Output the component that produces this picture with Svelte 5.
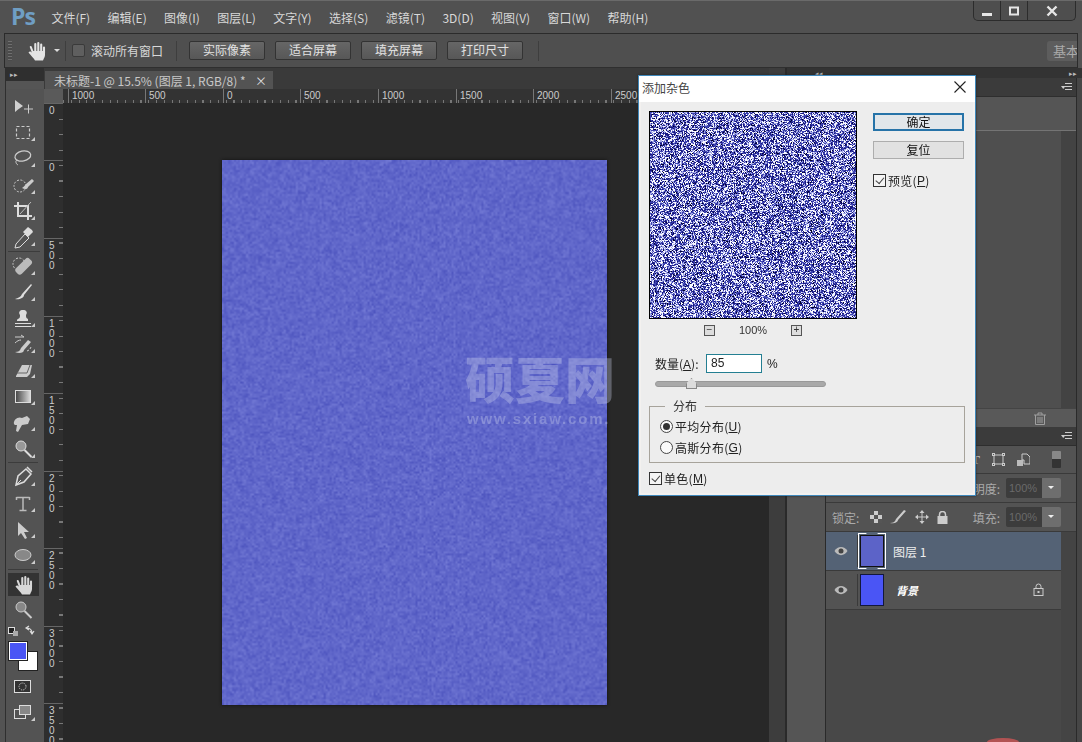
<script>
  import { onMount } from "svelte";

  const menus = ["文件(F)", "编辑(E)", "图像(I)", "图层(L)", "文字(Y)", "选择(S)", "滤镜(T)", "3D(D)", "视图(V)", "窗口(W)", "帮助(H)"];
  const optionButtons = ["实际像素", "适合屏幕", "填充屏幕", "打印尺寸"];
  const topTicks = [
    { label: "1000", x: 5 },
    { label: "500", x: 82 },
    { label: "0", x: 160 },
    { label: "500", x: 237 },
    { label: "1000", x: 315 },
    { label: "1500", x: 393 },
    { label: "2000", x: 470 },
    { label: "2500", x: 548 }
  ];
  const sideTicks = [
    { label: "0", y: 0 },
    { label: "0", y: 57 },
    { label: "500", y: 135 },
    { label: "1000", y: 213 },
    { label: "1500", y: 290 },
    { label: "2000", y: 368 },
    { label: "2500", y: 445 },
    { label: "3000", y: 523 },
    { label: "3500", y: 600 }
  ];
  // y of the little flyout triangle under each tool
  const flyouts = [141, 167, 194, 220, 246, 275, 301, 327, 353, 378, 405, 431, 458, 486, 512, 538, 564, 593, 721];

  let preview;
  let doc;

  // small seeded random so every run gives the same grain
  const makeRand = (seed) => () => {
    seed = (seed * 1664525 + 1013904223) % 4294967296;
    return seed / 4294967296;
  };

  const drawPreview = () => {
    const ctx = preview.getContext("2d");
    const off = document.createElement("canvas");
    off.width = 206;
    off.height = 206;
    const octx = off.getContext("2d");
    const img = octx.createImageData(206, 206);
    const rand = makeRand(77);
    for (let i = 0; i < img.data.length; i += 4) {
      const r = rand();
      let c = [24, 24, 126];
      if (r > 0.74) c = [250, 250, 255];
      else if (r > 0.52) c = [165, 170, 230];
      else if (r > 0.24) c = [60, 66, 176];
      else if (r < 0.05) c = [0, 0, 40];
      img.data[i] = c[0];
      img.data[i + 1] = c[1];
      img.data[i + 2] = c[2];
      img.data[i + 3] = 255;
    }
    octx.putImageData(img, 0, 0);
    ctx.filter = "blur(0.35px)";
    ctx.drawImage(off, 0, 0);
  };

  const drawDoc = () => {
    const ctx = doc.getContext("2d");
    const w = doc.width;
    const h = doc.height;
    const rand = makeRand(1234);
    // soft grain: coarse noise scaled up over a flat base
    const small = document.createElement("canvas");
    small.width = Math.ceil(w / 2);
    small.height = Math.ceil(h / 2);
    const sctx = small.getContext("2d");
    const img = sctx.createImageData(small.width, small.height);
    for (let i = 0; i < img.data.length; i += 4) {
      const d = (rand() + rand() - 1) * 20;
      img.data[i] = 96 + d;
      img.data[i + 1] = 103 + d;
      img.data[i + 2] = 202 + d * 0.6;
      img.data[i + 3] = 255;
    }
    sctx.putImageData(img, 0, 0);
    ctx.imageSmoothingEnabled = true;
    ctx.drawImage(small, 0, 0, w, h);
  };

  onMount(() => {
    drawPreview();
    drawDoc();
  });
</script>

{#snippet hand(size, color)}
  <svg width={size} height={size} viewBox="0 0 20 20">
    <g stroke={color} stroke-width="2.100" stroke-linecap="round" fill="none">
      <path d="M5.500 10.500L3.800 6M8.300 10V3M11.300 10V2M14.200 10V3.500M17 12V6.500" />
    </g>
    <path d="M5 10h13v4c0 2-1 3-2 5.500H8c-1-2-4-5-6.500-8 1-1.500 2.500-1 3.500 0z" fill={color} />
  </svg>
{/snippet}

{#snippet menuIcon()}
  <svg width="11" height="8" viewBox="0 0 11 8"><path d="M0 3h4.500L2.250 6z" fill="#ccc" /><path d="M4 .5h7M4 3.500h7M4 6.500h7" stroke="#ccc" /></svg>
{/snippet}

<div class="app">
  <div class="menubar">
    <div class="logo">Ps</div>
    {#each menus as m}
      <span class="menu">{m}</span>
    {/each}
    <div class="winbtns">
      <span class="wb"><svg width="12" height="12" viewBox="0 0 12 12"><rect x="1" y="8" width="10" height="3" fill="#e6e6e6" /></svg></span>
      <span class="wb"><svg width="12" height="12" viewBox="0 0 12 12"><rect x="2" y="2.500" width="8" height="7" fill="none" stroke="#e6e6e6" stroke-width="2" /></svg></span>
      <span class="wb close"><svg width="12" height="12" viewBox="0 0 12 12"><path d="M1.500 1.500l9 9M10.500 1.500l-9 9" stroke="#e6e6e6" stroke-width="2.400" /></svg></span>
    </div>
  </div>

  <div class="options">
    <div class="grip"></div>
    <span class="opt-hand">{@render hand(20, "#e4e4e4")}</span>
    <span class="caret"></span>
    <span class="sep"></span>
    <span class="opt-check"></span>
    <span class="opt-label">滚动所有窗口</span>
    <span class="sep wide"></span>
    {#each optionButtons as b}
      <span class="opt-btn">{b}</span>
    {/each}
    <span class="sep"></span>
    <span class="workspace-btn">基本</span>
  </div>

  <div class="main">
    <div class="toolbox">
      <div class="tool-head">▸▸</div>
      <div class="tool-grip"></div>
      <svg class="tools" width="38" height="653" viewBox="6 89 38 653" fill="none">
        <!-- move -->
        <g transform="translate(23 106)"><path d="M-8-6V6l3-2.500L0 0z" fill="#d0d0d0" /><path d="M1 3h9M5.500-1.500v9" stroke="#ccc" /></g>
        <!-- marquee -->
        <rect x="16.500" y="126.500" width="13" height="12" stroke="#ccc" stroke-width="1.200" stroke-dasharray="3 2" />
        <!-- lasso -->
        <g transform="translate(23 157)"><ellipse cx="0" cy="-1" rx="8" ry="5" stroke="#ccc" stroke-width="1.300" transform="rotate(-12)" /><path d="M-6 3c-2 1-1 4 1 5" stroke="#ccc" /></g>
        <!-- quick select -->
        <g transform="translate(23 185)"><circle cx="-3" cy="1" r="6" stroke="#ccc" stroke-dasharray="2 1.500" /><path d="M-1 3c2-1 3-3 4-4l6-5 2 2-6 6c0 2-3 3-6 1z" fill="#ccc" /></g>
        <!-- crop -->
        <g transform="translate(23 211)"><path d="M-5-9V5H9M-9-5H5V9" stroke="#ddd" stroke-width="2" /><path d="M-3 3L8-9" stroke="#bbb" /></g>
        <!-- eyedropper -->
        <g transform="translate(23 237)"><path d="M-7 7l9-10 4 4-9 9-5 1z" stroke="#ddd" /><path d="M0-5l5-5 4 3 1 2-5 5z" fill="#ddd" /></g>
        <line x1="8" y1="251.500" x2="40" y2="251.500" stroke="#3c3c3c" />
        <!-- healing -->
        <g transform="translate(23 266)"><circle cx="-4" cy="-2" r="6" stroke="#ccc" stroke-dasharray="2 1.500" /><rect x="-9" y="-4" width="19" height="8" rx="3" fill="#bbb" transform="rotate(-45 1 0)" /></g>
        <!-- brush -->
        <path d="M15 299c3-1 6-2 7-5l9-10 1 1-8 10c0 3-5 5-9 4z" fill="#ddd" />
        <!-- stamp -->
        <path d="M18 321h10v-2c-2-1-2-2-2-4 2-3 0-5-3-5s-5 2-3 5c0 2 0 3-2 4-1 0-1 1-1 2zM15 323h16v1H15zM15 326h16v1H15z" fill="#ddd" />
        <!-- history brush -->
        <g transform="translate(23 344)"><path d="M-8-7h9l-3-2M-8-1c2-2 4-3 6-3" stroke="#ccc" /><path d="M-8 8c3 0 5-1 6-4l7-8 3 2-7 8c0 3-5 4-9 2z" fill="#ccc" /><path d="M4 7l2-1M7 5l1-2" stroke="#ccc" /></g>
        <!-- eraser -->
        <path d="M16 376l6-11h10l-2 9-3 3H16z" fill="#ccc" /><path d="M17 373h10l3-8" stroke="#666" />
        <!-- gradient -->
        <defs><linearGradient id="g1"><stop offset="0" stop-color="#444" /><stop offset="1" stop-color="#ddd" /></linearGradient></defs>
        <rect x="15.500" y="390.500" width="15" height="12" fill="url(#g1)" stroke="#ddd" />
        <!-- smudge -->
        <path d="M14 424c-1-4 4-8 8-6l5-2 3 3-2 5-6 1-4 7-2-1 1-6c-1 0-3 0-3-1z" fill="#ccc" />
        <!-- dodge -->
        <circle cx="21" cy="446" r="5" fill="#999" stroke="#ddd" /><path d="M24.500 450l7 7" stroke="#ddd" stroke-width="2" />
        <line x1="8" y1="462.500" x2="38" y2="462.500" stroke="#3c3c3c" />
        <!-- pen -->
        <path d="M16 485l2-9 8-7 5 5-7 8zM27 467l5 5" stroke="#ddd" stroke-width="1.500" /><path d="M16 485l5-5" stroke="#ddd" />
        <!-- type -->
        <path d="M16.500 497.500h13M23 497v13M19.500 510.500h7M16.500 497v3M29.500 497v3" stroke="#bbb" stroke-width="1.500" />
        <!-- path select -->
        <path d="M18 522v14l3-3 4 6 2-1-3-6h5z" fill="#ccc" />
        <!-- ellipse -->
        <ellipse cx="23" cy="555" rx="8" ry="5.500" fill="#888" stroke="#ccc" />
        <line x1="8" y1="569.500" x2="38" y2="569.500" stroke="#3c3c3c" />
        <!-- zoom -->
        <circle cx="21" cy="607" r="5" fill="#888" stroke="#ccc" /><path d="M24.500 611l7 7" stroke="#ccc" stroke-width="2" />
        <!-- default / swap colours -->
        <rect x="8.500" y="627.500" width="6" height="6" fill="#222" stroke="#ddd" /><rect x="13" y="631" width="5" height="5" fill="#aaa" />
        <path d="M29 626l-3 2 3 2M26 628c4 0 6 2 6 5M30 631l2 3 2-3" stroke="#ddd" stroke-width="1.200" />
        <!-- quick mask -->
        <rect x="14.500" y="680.500" width="16" height="12" fill="#333" stroke="#ddd" /><circle cx="22.500" cy="686.500" r="3.500" stroke="#ddd" stroke-dasharray="1 1" />
        <!-- screen mode -->
        <rect x="14.500" y="709.500" width="11" height="9" stroke="#ddd" /><rect x="19.500" y="705.500" width="11" height="9" fill="#888" stroke="#ddd" />
        {#each flyouts as y}
          <path d="M31 {y}h4v-4z" fill="#ccc" />
        {/each}
      </svg>
      <div class="hand-active">{@render hand(20, "#d8d8d8")}</div>
      <div class="swatch-bg"></div>
      <div class="swatch-fg"></div>
    </div>

    <div class="docarea">
      <div class="tabrow">
        <div class="tab"><span>未标题-1 @ 15.5% (图层 1, RGB/8) *</span><span class="tab-x">×</span></div>
      </div>
      <div class="ruler-top">
        <div class="corner"></div>
        <div class="ticks-h">
          {#each topTicks as t}
            <span class="rt" style="left:{t.x}px">{t.label}</span>
          {/each}
        </div>
      </div>
      <div class="below-ruler">
        <div class="ruler-side">
          {#each sideTicks as t}
            <span class="rs" style="top:{t.y}px">{#each t.label.split("") as ch}<i>{ch}</i>{/each}</span>
          {/each}
        </div>
        <div class="workspace">
          <div class="docwrap">
            <canvas bind:this={doc} width="385" height="545"></canvas>
            <div class="wm">
              <div class="wm-cn">硕夏网</div>
              <div class="wm-en">www.sxiaw.com.</div>
            </div>
          </div>
        </div>
      </div>
    </div>

    <div class="gutter"></div>

    <div class="dock">
      <div class="dock-head"><span class="dh-left">◂◂</span><span class="dh-right">▸▸</span></div>
      <div class="dock-body">
        <div class="strip-a"></div>
        <div class="panels">
          <div class="panel-head">{@render menuIcon()}</div>
          <div class="sub-row"></div>
          <div class="upper-body"><div class="upper-inner"></div></div>
          <div class="upper-foot">
            <svg width="12" height="13" viewBox="0 0 12 13" fill="none" stroke="#a0a0a0"><path d="M0 3h12M4 3V1h4v2M1.500 3v9.500h9V3M4 5v6M6 5v6M8 5v6" /></svg>
          </div>
          <div class="panel-head">{@render menuIcon()}</div>
          <div class="filter-row">
            <span class="f-t">T</span>
            <svg width="13" height="13" viewBox="0 0 13 13" fill="none" stroke="#ccc"><rect x="2" y="2" width="9" height="9" /><rect x="0.500" y="0.500" width="2" height="2" fill="#555" /><rect x="10.500" y="0.500" width="2" height="2" fill="#555" /><rect x="0.500" y="10.500" width="2" height="2" fill="#555" /><rect x="10.500" y="10.500" width="2" height="2" fill="#555" /></svg>
            <svg width="13" height="14" viewBox="0 0 13 14"><path d="M5 1h5l3 3v7H7V7H5z" fill="none" stroke="#ccc" /><rect x="0" y="7" width="6" height="6" fill="#bbb" /></svg>
            <span class="toggle"></span>
          </div>
          <div class="prop-row">
            <span class="prop-label">明度:</span>
            <span class="prop-val">100%</span><span class="prop-arrow"></span>
          </div>
          <div class="prop-row lock">
            <span class="lock-label">锁定:</span>
            <svg width="12" height="12" viewBox="0 0 12 12"><rect width="12" height="12" fill="#ccc" /><rect width="4" height="4" fill="#555" /><rect x="8" width="4" height="4" fill="#555" /><rect x="4" y="4" width="4" height="4" fill="#555" /><rect y="8" width="4" height="4" fill="#555" /><rect x="8" y="8" width="4" height="4" fill="#555" /></svg>
            <svg width="17" height="14" viewBox="0 0 17 14"><path d="M0 13c3 0 5-1 6-4l8-9 2 1-8 9c0 2-4 4-8 3z" fill="#ccc" /></svg>
            <svg width="14" height="14" viewBox="0 0 14 14" fill="#ccc"><path d="M7 0l2.500 3h-5zM7 14l-2.500-3h5zM0 7l3-2.500v5zM14 7l-3 2.500v-5z" /><path d="M7 2v10M2 7h10" stroke="#ccc" /></svg>
            <svg width="11" height="13" viewBox="0 0 11 13"><rect x="0.500" y="5" width="10" height="8" fill="#ccc" /><path d="M2.500 5V3.500a3 3 0 0 1 6 0V5" fill="none" stroke="#ccc" stroke-width="1.500" /></svg>
            <span class="prop-label fill">填充:</span>
            <span class="prop-val">100%</span><span class="prop-arrow"></span>
          </div>
          <div class="layers">
            <div class="layer selected">
              <svg class="eye" width="14" height="10" viewBox="0 0 14 10"><path d="M0.500 5c3-5.500 10-5.500 13 0-3 5.500-10 5.500-13 0z" fill="#bbb" /><circle cx="7" cy="5" r="2.500" fill="#444" /></svg>
              <div class="thumb-wrap">
                <div class="thumb noise"></div>
                <span class="bracket"></span>
              </div>
              <span class="lname">图层 1</span>
            </div>
            <div class="layer">
              <svg class="eye" width="14" height="10" viewBox="0 0 14 10"><path d="M0.500 5c3-5.500 10-5.500 13 0-3 5.500-10 5.500-13 0z" fill="#bbb" /><circle cx="7" cy="5" r="2.500" fill="#444" /></svg>
              <div class="thumb-wrap"><div class="thumb blue"></div></div>
              <span class="lname bg">背景</span>
              <svg class="layer-lock" width="11" height="13" viewBox="0 0 11 13"><rect x="1" y="5.500" width="9" height="7" fill="none" stroke="#ccc" /><path d="M3 5.500V3.500a2.500 2.500 0 0 1 5 0v2" fill="none" stroke="#ccc" /><rect x="4.500" y="8" width="2" height="2" fill="#ccc" /></svg>
            </div>
            <div class="layers-empty"><span class="badge"></span></div>
          </div>
        </div>
        <div class="strip-b"></div>
      </div>
    </div>
  </div>

  <div class="dialog">
    <div class="dlg-title">
      <span>添加杂色</span>
      <svg width="12" height="12" viewBox="0 0 12 12"><path d="M0.500 0.500l11 11M11.500 0.500l-11 11" stroke="#222" stroke-width="1.100" /></svg>
    </div>
    <div class="dlg-body">
      <div class="dlg-top">
        <div class="preview-col">
          <canvas class="preview" bind:this={preview} width="206" height="206"></canvas>
          <div class="zoom-row">
            <span class="zbtn">−</span>
            <span class="zval">100%</span>
            <span class="zbtn">+</span>
          </div>
        </div>
        <div class="dlg-side">
          <button class="dbtn primary">确定</button>
          <button class="dbtn">复位</button>
          <label class="chk side"><span class="box checked"></span>预览(<u>P</u>)</label>
        </div>
      </div>
      <div class="amount">
        <span class="amount-label">数量(<u>A</u>):</span>
        <span class="amount-input">85</span>
        <span class="pct">%</span>
      </div>
      <div class="slider"><span class="thumb-tri"></span></div>
      <fieldset>
        <legend>分布</legend>
        <label class="radio"><span class="dot on"></span>平均分布(<u>U</u>)</label>
        <label class="radio"><span class="dot"></span>高斯分布(<u>G</u>)</label>
      </fieldset>
      <label class="chk mono"><span class="box checked"></span>单色(<u>M</u>)</label>
    </div>
  </div>
</div>

<style>
  :global(body) {
    margin: 0;
    background: #535353;
  }
  .app {
    position: relative;
    width: 1082px;
    height: 742px;
    overflow: hidden;
    background: #535353;
    color: #ddd;
    font-family: "Noto Sans CJK SC", "Liberation Sans", sans-serif;
    font-size: 12px;
    display: flex;
    flex-direction: column;
  }
  .menubar {
    height: 33px;
    flex: none;
    display: flex;
    align-items: center;
    gap: 17.400px;
    box-sizing: border-box;
    padding-left: 11px;
    border-top: 1px solid #6a6a6a;
    background: #515151;
  }
  .logo {
    width: 23px;
    font: bold 23px "Open Sans", sans-serif;
    color: #6f9ec4;
    letter-spacing: -1px;
    margin-top: -2px;
  }
  .menu {
    color: #d8d8d8;
    white-space: nowrap;
  }
  .winbtns {
    margin-left: auto;
    margin-right: 6px;
    align-self: flex-start;
    display: flex;
    height: 19px;
    border: 1px solid #2c2c2c;
    border-top: none;
    border-radius: 0 0 5px 5px;
    background: #4e4e4e;
  }
  .wb {
    width: 26px;
    display: flex;
    align-items: center;
    justify-content: center;
    border-right: 1px solid #2c2c2c;
  }
  .wb.close {
    width: 47px;
    border-right: none;
  }
  .options {
    height: 35px;
    flex: none;
    margin: 0 4px;
    display: flex;
    align-items: center;
    box-sizing: border-box;
    background: #4f4f4f;
    border: 1px solid #2b2b2b;
    border-bottom-color: #2f2f2f;
  }
  .grip {
    width: 4px;
    height: 20px;
    margin-left: 3px;
    background: repeating-linear-gradient(to bottom, #6f6f6f 0 1px, #4a4a4a 1px 3px);
  }
  .opt-hand {
    display: flex;
    margin-left: 15px;
  }
  .caret {
    margin-left: 7px;
    border: 3px solid transparent;
    border-top: 3px solid #ddd;
    margin-top: 3px;
  }
  .sep {
    width: 1px;
    height: 20px;
    background: #3e3e3e;
    margin-left: 5px;
  }
  .sep.wide {
    margin-left: 14px;
    margin-right: 12px;
  }
  .opt-check {
    width: 11px;
    height: 11px;
    margin-left: 6px;
    background: #5f5f5f;
    border: 1px solid #3a3a3a;
    border-radius: 2px;
  }
  .opt-label {
    margin-left: 6px;
    width: 71px;
    color: #d8d8d8;
    white-space: nowrap;
  }
  .opt-btn {
    width: 74px;
    height: 17px;
    margin-right: 10px;
    line-height: 16px;
    text-align: center;
    background: linear-gradient(#666, #575757);
    border: 1px solid #333;
    border-radius: 2px;
    color: #e2e2e2;
  }
  .workspace-btn {
    margin-left: auto;
    width: 24px;
    height: 20px;
    line-height: 20px;
    padding-left: 6px;
    overflow: hidden;
    background: #5d5d5d;
    color: #aaa;
    font-size: 13px;
    border-radius: 3px 0 0 3px;
    white-space: nowrap;
  }
  .main {
    flex: 1;
    display: flex;
    min-height: 0;
  }
  .toolbox {
    position: relative;
    width: 38px;
    margin-left: 5px;
    flex: none;
    background: #535353;
    border-left: 1px solid #2f2f2f;
  }
  .tool-head {
    height: 13px;
    background: #2f2f2f;
    font-size: 7px;
    line-height: 13px;
    padding-left: 4px;
    color: #bbb;
  }
  .tool-grip {
    height: 8px;
    background: #555;
  }
  .tools {
    display: block;
  }
  .hand-active {
    position: absolute;
    left: 2px;
    top: 505px;
    width: 31px;
    height: 23px;
    background: #333;
    display: flex;
    align-items: center;
    justify-content: center;
  }
  .swatch-fg {
    position: absolute;
    left: 3px;
    top: 574px;
    width: 16px;
    height: 16px;
    background: #4a55f5;
    border: 1px solid #fff;
    outline: 1px solid #222;
  }
  .swatch-bg {
    position: absolute;
    left: 13px;
    top: 584px;
    width: 18px;
    height: 18px;
    background: #fff;
    outline: 1px solid #222;
  }
  .docarea {
    width: 725px;
    flex: none;
    display: flex;
    flex-direction: column;
    min-height: 0;
  }
  .tabrow {
    height: 21px;
    flex: none;
    display: flex;
    align-items: flex-end;
    background: #3a3a3a;
    padding-left: 1px;
  }
  .tab {
    width: 228px;
    height: 18px;
    box-sizing: border-box;
    padding: 0 6px 0 9px;
    display: flex;
    align-items: center;
    justify-content: space-between;
    background: #535353;
    color: #c8c8c8;
    white-space: nowrap;
  }
  .tab-x {
    color: #ddd;
    font-size: 12px;
  }
  .ruler-top {
    height: 14px;
    flex: none;
    display: flex;
    background: #333;
  }
  .corner {
    width: 19px;
    flex: none;
    background: #5a5a5a;
  }
  .ticks-h {
    position: relative;
    flex: 1;
    background: repeating-linear-gradient(to right, #777 0 1px, transparent 1px 7.750px) left bottom / 100% 3px no-repeat, #333;
  }
  .rt {
    position: absolute;
    top: 0;
    font: 10px/13px "Liberation Sans", sans-serif;
    color: #ccc;
    padding-left: 3px;
    border-left: 1px solid #777;
    height: 14px;
  }
  .below-ruler {
    flex: 1;
    display: flex;
    min-height: 0;
  }
  .ruler-side {
    position: relative;
    width: 19px;
    flex: none;
    overflow: hidden;
    background: repeating-linear-gradient(to bottom, #777 0 1px, transparent 1px 15.500px) right top / 4px 100% no-repeat, #2e2e2e;
  }
  .rs {
    position: absolute;
    left: 0;
    width: 100%;
    padding-top: 2px;
    padding-left: 5px;
    box-sizing: border-box;
    border-top: 1px solid #666;
    font: 10px/10px "Liberation Sans", sans-serif;
    color: #ccc;
  }
  .rs i {
    display: block;
    font-style: normal;
  }
  .workspace {
    flex: 1;
    background: #282828;
    padding: 57px 0 0 159px;
    min-height: 0;
  }
  .docwrap {
    position: relative;
    width: 385px;
    height: 545px;
    box-shadow: 0 0 3px #111;
  }
  .docwrap canvas {
    display: block;
  }
  .wm {
    position: absolute;
    left: 243px;
    top: 188px;
    width: 160px;
    color: rgba(205, 210, 238, 0.34);
  }
  .wm-cn {
    font: 900 50px/58px "Noto Sans CJK SC", sans-serif;
    white-space: nowrap;
  }
  .wm-en {
    font: bold 15px/18px "Liberation Sans", sans-serif;
    letter-spacing: 1.800px;
    margin: 4px 0 0 2px;
    white-space: nowrap;
  }
  .gutter {
    width: 16px;
    flex: none;
    background: #3d3d3d;
  }
  .dock {
    flex: 1;
    display: flex;
    flex-direction: column;
    min-width: 0;
    border-left: 2px solid #2a2a2a;
  }
  .dock-head {
    height: 10px;
    flex: none;
    display: flex;
    justify-content: space-between;
    background: #333;
    color: #bbb;
    font-size: 7px;
    line-height: 10px;
    padding: 0 5px 0 28px;
  }
  .dock-body {
    flex: 1;
    display: flex;
    min-height: 0;
  }
  .strip-a {
    width: 38px;
    flex: none;
    background: #555;
  }
  .panels {
    width: 250px;
    flex: none;
    display: flex;
    flex-direction: column;
    background: #444;
    border-left: 1px solid #2a2a2a;
    border-right: 1px solid #2a2a2a;
    box-shadow: inset 1px 0 0 #333;
  }
  .panel-head {
    height: 18px;
    flex: none;
    background: #3b3b3b;
    border-bottom: 1px solid #2e2e2e;
    display: flex;
    align-items: center;
    justify-content: flex-end;
    padding-right: 4px;
  }
  .sub-row {
    height: 33px;
    flex: none;
    background: #555;
    border-bottom: 1px solid #747474;
  }
  .upper-body {
    height: 277px;
    flex: none;
    background: #434343;
    padding-right: 15px;
    box-sizing: border-box;
  }
  .upper-inner {
    height: 100%;
    background: #4f4f4f;
  }
  .upper-foot {
    height: 19px;
    flex: none;
    box-sizing: border-box;
    display: flex;
    align-items: center;
    justify-content: flex-end;
    padding-right: 30px;
    background: #595959;
    border-top: 1px solid #444;
  }
  .filter-row {
    height: 28px;
    flex: none;
    box-sizing: border-box;
    display: flex;
    align-items: center;
    justify-content: flex-end;
    gap: 12px;
    padding-right: 15px;
    background: #535353;
    border-bottom: 1px solid #3a3a3a;
  }
  .f-t {
    font: bold 13px "Liberation Serif", serif;
    color: #bbb;
  }
  .toggle {
    width: 9px;
    height: 17px;
    background: linear-gradient(#888 50%, #333 50%);
    border-radius: 1px;
    margin-left: 10px;
  }
  .prop-row {
    height: 29px;
    flex: none;
    box-sizing: border-box;
    display: flex;
    align-items: center;
    justify-content: flex-end;
    padding-right: 15px;
    background: #535353;
    border-bottom: 1px solid #3a3a3a;
  }
  .prop-row.lock {
    justify-content: flex-start;
    padding-left: 6px;
    gap: 8px;
  }
  .prop-label {
    color: #aaa;
    margin-right: 6px;
  }
  .prop-label.fill {
    margin-left: auto;
    margin-right: -2px;
  }
  .lock-label {
    color: #aaa;
    width: 30px;
  }
  .prop-val {
    width: 33px;
    height: 20px;
    padding-left: 3px;
    background: #3c3c3c;
    color: #6a6a6a;
    font: 11px/20px "Liberation Sans", sans-serif;
    border-radius: 2px 0 0 2px;
  }
  .prop-row.lock .prop-val {
    margin-right: -8px;
  }
  .prop-arrow {
    position: relative;
    width: 19px;
    height: 20px;
    background: #6e6e6e;
    border-radius: 0 2px 2px 0;
  }
  .prop-arrow::after {
    content: "";
    position: absolute;
    left: 6px;
    top: 8px;
    border: 3px solid transparent;
    border-top: 3px solid #eee;
  }
  .layers {
    flex: 1;
    display: flex;
    flex-direction: column;
    padding-right: 15px;
    min-height: 0;
  }
  .layer {
    height: 39px;
    flex: none;
    box-sizing: border-box;
    display: flex;
    align-items: center;
    background: #535353;
    border-bottom: 1px solid #3a3a3a;
    position: relative;
  }
  .layer.selected {
    background: #546275;
  }
  .eye {
    margin-left: 8px;
  }
  .thumb-wrap {
    position: relative;
    width: 24px;
    height: 32px;
    margin-left: 9px;
    padding-left: 2px;
    border-left: 1px solid #3a3a3a;
    display: flex;
    align-items: center;
  }
  .thumb {
    width: 24px;
    height: 32px;
    border: 1px solid #111;
    box-sizing: border-box;
  }
  .thumb.noise {
    background: #5c63c8;
  }
  .thumb.blue {
    background: #4a55f5;
    border-color: #13183c;
  }
  .bracket {
    position: absolute;
    left: 0;
    top: -2px;
    width: 28px;
    height: 36px;
    box-sizing: border-box;
    border: 1px solid #fff;
    clip-path: polygon(0 0, 30% 0, 30% 12%, 70% 12%, 70% 0, 100% 0, 100% 100%, 70% 100%, 70% 88%, 30% 88%, 30% 100%, 0 100%);
  }
  .lname {
    margin-left: 9px;
    color: #eee;
  }
  .lname.bg {
    margin-left: 12px;
    font-style: italic;
    font-size: 11px;
    font-weight: bold;
    color: #fff;
  }
  .layer-lock {
    position: absolute;
    right: 17px;
    top: 12px;
  }
  .layers-empty {
    flex: 1;
    position: relative;
    background: #484848;
  }
  .badge {
    position: absolute;
    left: 161px;
    bottom: 0;
    width: 32px;
    height: 4px;
    border-radius: 50% 50% 0 0 / 100% 100% 0 0;
    background: #b25353;
  }
  .strip-b {
    flex: 1;
    background: #464646;
  }
  .dialog {
    position: absolute;
    left: 638px;
    top: 75px;
    width: 338px;
    height: 421px;
    box-sizing: border-box;
    background: #ededed;
    border: 1px solid #3f88bb;
    color: #1a1a1a;
    box-shadow: 0 0 2px #222, inset 0 0 0 2px #f3f1ef;
  }
  .dlg-title {
    height: 22px;
    padding: 0 9px 4px 3px;
    background: #fff;
    display: flex;
    align-items: center;
    justify-content: space-between;
    color: #444;
  }
  .dlg-body {
    padding: 9px 10px 0 10px;
  }
  .dlg-top {
    display: flex;
  }
  .preview {
    display: block;
    width: 206px;
    height: 206px;
    border: 1px solid #000;
  }
  .zoom-row {
    height: 22px;
    display: flex;
    align-items: center;
    justify-content: center;
    gap: 20px;
    font: 11px "Liberation Sans", sans-serif;
    color: #333;
  }
  .zbtn {
    width: 9px;
    height: 9px;
    line-height: 8px;
    text-align: center;
    background: #ddd;
    border: 1px solid #555;
    font-size: 10px;
  }
  .zval {
    width: 30px;
    text-align: center;
    margin: 0 3px;
  }
  .dlg-side {
    margin-left: 16px;
    padding-top: 2px;
    display: flex;
    flex-direction: column;
    width: 91px;
  }
  .dbtn {
    width: 91px;
    height: 18px;
    padding: 0;
    margin-bottom: 10px;
    background: #e1e1e1;
    border: 1px solid #adadad;
    color: #111;
    font: 12px/14px "Noto Sans CJK SC", sans-serif;
    box-sizing: border-box;
  }
  .dbtn.primary {
    background: #e1e6ea;
    border: 2px solid #2673a8;
  }
  .chk {
    display: flex;
    align-items: center;
    color: #222;
    letter-spacing: 0.300px;
  }
  .chk u {
    font-family: "Liberation Sans", sans-serif;
  }
  .chk.side {
    margin-top: 3px;
  }
  .box {
    position: relative;
    width: 11px;
    height: 11px;
    border: 1px solid #333;
    background: #f4f4f4;
    margin-right: 2px;
  }
  .box.checked::after {
    content: "";
    position: absolute;
    left: 1px;
    top: 0px;
    width: 7px;
    height: 4px;
    border-left: 1px solid #444;
    border-bottom: 1px solid #444;
    transform: rotate(-50deg) translate(-1px, 2px);
  }
  .amount {
    display: flex;
    align-items: center;
    margin-top: 13px;
    margin-left: 6px;
    color: #222;
  }
  .amount-label {
    width: 51px;
    white-space: nowrap;
  }
  .amount-label u {
    font-family: "Liberation Sans", sans-serif;
  }
  .amount-input {
    width: 50px;
    height: 17px;
    line-height: 17px;
    padding-left: 4px;
    border: 1px solid #247f92;
    background: #fff;
    font-family: "Liberation Sans", sans-serif;
  }
  .pct {
    margin-left: 5px;
    font-family: "Liberation Sans", sans-serif;
  }
  .slider {
    position: relative;
    width: 169px;
    height: 4px;
    margin: 8px 0 0 6px;
    background: #a9a9a9;
    border: 1px solid #999;
    border-radius: 3px;
  }
  .thumb-tri {
    position: absolute;
    left: 30px;
    top: -4px;
    width: 9px;
    height: 9px;
    background: #dcdcdc;
    border: 1px solid #888;
    clip-path: polygon(50% 0, 100% 50%, 100% 100%, 0 100%, 0 50%);
  }
  fieldset {
    margin: 12px 0 0 0;
    padding: 3px 0 0 10px;
    width: 316px;
    height: 64px;
    box-sizing: border-box;
    border: 1px solid #a7a39b;
  }
  legend {
    margin-left: 5px;
    padding: 0 8px;
    line-height: 14px;
    color: #333;
  }
  .radio {
    display: flex;
    align-items: center;
    height: 21px;
    color: #222;
    letter-spacing: 0.300px;
  }
  .radio u {
    font-family: "Liberation Sans", sans-serif;
  }
  .dot {
    position: relative;
    width: 11px;
    height: 11px;
    margin-right: 2px;
    border: 1px solid #444;
    border-radius: 50%;
    background: #fafafa;
  }
  .dot.on::after {
    content: "";
    position: absolute;
    left: 2px;
    top: 2px;
    width: 7px;
    height: 7px;
    border-radius: 50%;
    background: #333;
  }
  .chk.mono {
    margin-top: 7px;
  }
</style>
